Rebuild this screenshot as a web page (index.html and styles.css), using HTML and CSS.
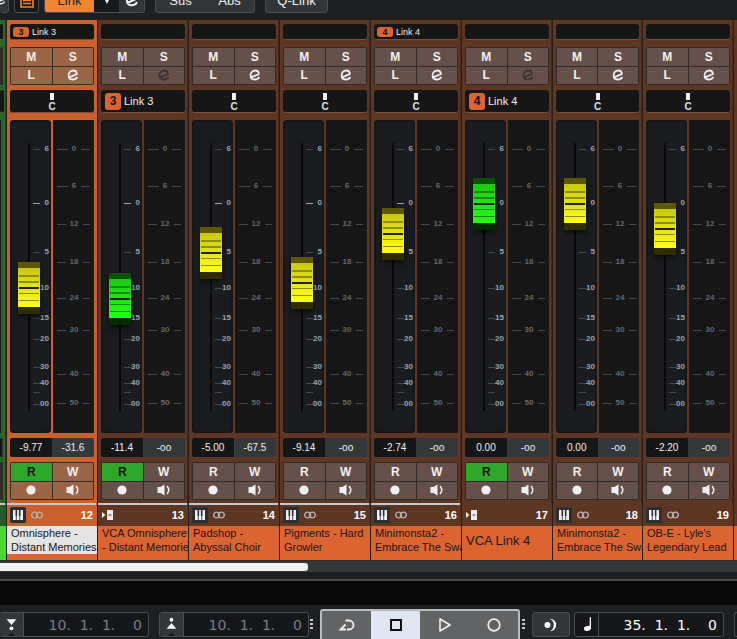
FILE: index.html
```html
<!DOCTYPE html>
<html lang="en">
<head>
<meta charset="utf-8">
<title>MixConsole</title>
<link rel="stylesheet" href="styles.css">
</head>
<body>
<svg class="defs" aria-hidden="true">
  <symbol id="edit" viewBox="0 0 12 12"><path d="M2.200 8.400 9.900 5C9.700 2.700 8.200 1.500 6.300 1.500 3.700 1.500 1.600 3.500 1.600 6.200 1.600 8.900 3.400 10.500 5.700 10.500 7.800 10.500 9.400 9.600 10.300 7.800" fill="none" stroke="currentColor" stroke-width="1.800"/></symbol>
  <symbol id="speaker" viewBox="0 0 14 12"><path d="M0.500 3h3L7.500 0.500v11L3.500 9h-3z" fill="currentColor"/><path d="M10 2q3.500 4 0 8" fill="none" stroke="currentColor" stroke-width="1.500"/></symbol>
  <symbol id="dot" viewBox="0 0 10 10"><circle cx="5" cy="5" r="4.600" fill="currentColor"/></symbol>
  <symbol id="keys" viewBox="0 0 16 16"><rect width="16" height="16" rx="2" fill="#2b2e33"/><path d="M3 3h10v10H3z" fill="#f0f0f0"/><path d="M6.300 8V13M9.700 8V13" stroke="#2b2e33" stroke-width="0.800"/><path d="M5.500 3h1.600v6h-1.600zM8.900 3h1.600v6h-1.600z" fill="#2b2e33"/></symbol>
  <symbol id="rings" viewBox="0 0 12 8"><circle cx="3.600" cy="4" r="2.900" fill="none" stroke="currentColor" stroke-width="1.400"/><circle cx="8.400" cy="4" r="2.900" fill="none" stroke="currentColor" stroke-width="1.400"/></symbol>
  <symbol id="vca" viewBox="0 0 12 10"><path d="M0 2l3.500 3L0 8zM5 0h6v10H5z" fill="#ececec"/><path d="M6.500 5h3" stroke="#5e3624"/></symbol>
</svg>

<header class="toolbar">
  <button class="tool tail" aria-label="Configure"><svg width="10" height="12"><use href="#edit"/></svg></button>
  <button class="tool list" aria-label="Racks"><svg width="14" height="16" viewBox="0 0 14 16"><path d="M1 1h12v14H1zM3 8.500h8M3 11.500h8" fill="none" stroke="currentColor" stroke-width="1.600"/></svg></button>
  <div class="group">
    <button class="link">Link</button>
    <button class="arrow" aria-label="Link options"><svg width="8" height="8" viewBox="0 0 8 8"><path d="M0 0h8L4 8z" fill="currentColor"/></svg></button>
    <button class="edit" aria-label="Edit link group"><svg width="14" height="14"><use href="#edit"/></svg></button>
  </div>
  <div class="group pair"><button>Sus</button><button>Abs</button></div>
  <button class="tool qlink">Q-Link</button>
</header>

<main class="mixer" id="mixer"></main>

<div class="scroll"><div class="thumb"></div></div>
<div class="divider"></div>
<div class="gap"></div>

<footer class="transport">
  <label class="locator left">
    <svg width="24" height="24" viewBox="0 0 24 24"><path d="M7 6h10l-5 6z" fill="#fff"/><circle cx="12" cy="15.500" r="2" fill="#fff"/><path d="M8 24l4-4 4 4z" fill="#17181a"/></svg>
    <input aria-label="Left locator" value="10.  1.  1.    0">
  </label>
  <label class="locator right">
    <svg width="24" height="24" viewBox="0 0 24 24"><path d="M7 16h10l-5-6z" fill="#fff"/><circle cx="12" cy="6.500" r="2" fill="#fff"/><path d="M8 24l4-4 4 4z" fill="#17181a"/></svg>
    <input aria-label="Right locator" value="10.  1.  1.    0">
  </label>
  <span class="grip"></span>
  <div class="buttons">
    <button aria-label="Cycle"><svg width="18" height="16" viewBox="0 0 18 16"><path d="M7.500 3.500H11a4.300 4.300 0 0 1 0 9H9M7.500 7.500 2.500 12.500H8" fill="none" stroke="currentColor" stroke-width="1.800"/></svg></button>
    <button class="on" aria-label="Stop"><svg width="12" height="12" viewBox="0 0 12 12"><path d="M1 1h10v10H1z" fill="none" stroke="currentColor" stroke-width="2"/></svg></button>
    <button aria-label="Play"><svg width="14" height="16" viewBox="0 0 14 16"><path d="M2 2l10 6-10 6z" fill="none" stroke="currentColor" stroke-width="1.600" stroke-linejoin="round"/></svg></button>
    <button aria-label="Record"><svg width="14" height="14" viewBox="0 0 14 14"><circle cx="7" cy="7" r="5.800" fill="none" stroke="currentColor" stroke-width="1.700"/></svg></button>
  </div>
  <span class="grip"></span>
  <button class="punch" aria-label="Punch"><svg width="14" height="14" viewBox="0 0 14 14"><circle cx="3.500" cy="7" r="3" fill="#fff"/><path d="M6 0.800a6.200 6.200 0 1 1 0 12.400 7 7 0 0 0 0-12.400z" fill="#fff"/></svg></button>
  <label class="locator time">
    <svg width="24" height="24" viewBox="0 0 24 24"><path d="M16 4v11.500" stroke="#fff" stroke-width="1.400"/><ellipse cx="13" cy="15.500" rx="3.700" ry="2.600" fill="#fff" transform="rotate(-15 13 15.500)"/></svg>
    <input aria-label="Primary time" value="35.  1.  1.    0">
  </label>
  <span class="next"></span>
</footer>
<script src="mixer.js"></script>
</body>
</html>
```
FILE: styles.css
```css
* { box-sizing: border-box; }
body {
  margin: 0;
  background: #1d1f21;
  color: #f0f0f0;
  font: 11px "Liberation Sans", Arial, sans-serif;
  overflow: hidden;
}
button, input { font: inherit; color: inherit; border: 0; padding: 0; margin: 0; background: none; }
button { display: flex; align-items: center; justify-content: center; }
svg { display: block; flex: none; }
.defs { position: absolute; width: 0; height: 0; }

.toolbar { height: 20px; display: flex; align-items: flex-end; padding-bottom: 7px; overflow: hidden; font-size: 13px; }
.toolbar button { height: 26px; }
.tool, .group { border: 1px solid #4a4c4f; border-radius: 3px; background: #323638; flex: none; }
.group { display: flex; height: 26px; overflow: hidden; margin-left: 5px; }
.group button { height: 24px; }
.tail { width: 9px; border-left: 0; }
.tail svg { margin-left: -6px; }
.list { width: 25px; margin-left: 5px; background: #17181a; color: #f0862e; }
.link { width: 49px; background: #f08630; color: #1c1c1c; }
.arrow { width: 25px; background: #17181a; }
.edit { width: 25px; }
.group.pair, .qlink { margin-left: 10px; }
.pair button { width: 49px; }
.qlink { width: 63px; }

.mixer { display: grid; grid-template-columns: 6px repeat(6, 91fr) 90fr 91fr 4px; }
.strip {
  --back: #5e3624;
  --cell: #65514a;
  --edge: #472719;
  min-width: 0;
  overflow: hidden;
  display: flex;
  flex-direction: column;
  border-left: 1px solid #26201c;
  background: var(--back);
}
.strip.selected { --back: #cb5f2d; --cell: #9b6548; --edge: #cb5f2d; }
.strip.before { --back: #2b662a; --cell: #46694a; --edge: #1b4a1b; border-left: 0; }
.body { flex: 1; padding: 4px 2px 3px 3px; border-right: 1px solid var(--edge); }
.before .body { padding-left: 0; }
.after .body { border-right: 0; }
.box { background: #161616; border-radius: 3px; border-bottom: 1px solid #76513f; }
.group-name { height: 16px; display: flex; align-items: center; gap: 3px; padding-left: 3px; font-size: 9px; }
.badge { background: #dc6430; color: #161616; font-weight: bold; border-radius: 3px; width: 16px; height: 10px; line-height: 10px; text-align: center; }
.pads {
  height: 38px;
  display: grid;
  grid-template: 1fr 1fr / 1fr 1fr;
  gap: 1px;
  padding: 1px;
  border-radius: 2px;
  background: #332b28;
  font-size: 12px;
  font-weight: bold;
}
.pads button { background: var(--cell); }
.pads .off { color: #3c3532; }
.pads .read { background: #2ea82a; color: #121212; }
.mute { margin-top: 7px; }
.pan { height: 23px; margin-top: 5px; padding-top: 3px; display: flex; flex-direction: column; align-items: center; font-size: 10px; line-height: 11px; font-weight: bold; color: #dbe2ec; }
.pan i { width: 4px; height: 7px; margin-bottom: 1px; background: #f0f0f0; }
.pan.vca { flex-direction: row; gap: 3px; padding: 0 0 0 4px; font-size: 11px; font-weight: normal; color: #f0f0f0; }
.pan .badge { width: 16px; height: 17px; line-height: 17px; font-weight: bold; font-size: 12px; }
.levels { height: 313px; margin-top: 7px; display: grid; grid-template-columns: 1fr 1fr; gap: 2px; }
.fader { position: relative; background: #1a1c1f; border-radius: 4px; box-shadow: inset 0 0 2px 1px #141414; overflow: hidden; }
.meter { background: #171717; }
.scale { width: 100%; height: 100%; font-size: 8px; font-weight: bold; }
.scale text { fill: #98a2ae; text-anchor: end; }
.scale line { stroke: #45484b; }
.scale .zero { stroke: #a0a4a8; }
.meter .scale text { fill: #64676a; text-anchor: middle; }
.fader input {
  --top: #5d5800; --light: #c8c811; --bright: #ffff19; --low: #302e00; --rib: #8f8d12;
  position: absolute;
  left: 8px;
  top: 3px;
  width: 22px;
  height: 307px;
  appearance: none;
  writing-mode: vertical-lr;
  direction: rtl;
}
.fader input.green { --top: #0b5200; --light: #1ec912; --bright: #24ff16; --low: #042c00; --rib: #148c0c; }
.fader input::-webkit-slider-thumb {
  appearance: none;
  width: 22px;
  height: 52px;
  box-shadow: 0 3px 5px #0008;
  background:
    linear-gradient(#222 0 0) 50% 25px / 20px 2px no-repeat,
    linear-gradient(var(--rib) 0 0) 50% 13px / 20px 2px no-repeat,
    linear-gradient(var(--rib) 0 0) 50% 19px / 20px 2px no-repeat,
    linear-gradient(var(--rib) 0 0) 50% 31px / 20px 1px no-repeat,
    linear-gradient(var(--rib) 0 0) 50% 38px / 20px 1px no-repeat,
    linear-gradient(var(--top) 0 6px, var(--light) 6px, var(--bright) 45px, var(--low) 45px);
}
.values { height: 19px; margin-top: 5px; display: grid; grid-template-columns: 1fr 1fr; border-radius: 2px; overflow: hidden; font-size: 10px; line-height: 19px; text-align: center; }
.values output { background: #151617; }
.values output + output { background: #33383a; }
.auto { margin-top: 5px; }
.line { height: 2px; margin-right: 1px; }
.line.lit { background: #c3cad6; }
.info { height: 21px; display: flex; align-items: center; gap: 5px; padding: 0 4px 1px 3px; color: #b4b0ae; }
.info b { margin-left: auto; color: #fff; }
.info .vca-icon { margin-left: 1px; }
.name { height: 34px; padding: 0 0 6px 4px; background: #dc6430; color: #1a1512; line-height: 14px; white-space: nowrap; overflow: hidden; }
.name.large { font-size: 13px; line-height: 29px; }
.selected .name { height: 34px; background: #e4e4e4; border-bottom: 6px solid #dc6430; }
.before .info { background: #245a24; }
.before .name { background: #48dc2c; }

.scroll { height: 12px; padding: 2px 0; background: #333738; border-top: 1px solid #2c2e30; }
.thumb { width: 41.8%; height: 8px; border-radius: 0 3px 3px 0; background: #f0f0f0; }
.divider { height: 9px; border-bottom: 2px solid #4a4b4f; }
.gap { height: 24px; background: #090909; }

.transport { height: 34px; display: flex; align-items: flex-start; padding-top: 7px; overflow: hidden; }
.locator { width: 150px; height: 25px; display: flex; flex: none; border: 1px solid #4a4c4f; border-radius: 3px; background: #16171a; font: 14px "DejaVu Sans", sans-serif; color: #7c7e80; overflow: hidden; }
.locator svg { background: #323638; border-right: 1px solid #4a4c4f; }
.locator input { flex: 1; min-width: 0; text-align: right; padding-right: 6px; }
.left { margin-left: -1px; }
.right { margin-left: 10px; }
.grip { width: 3px; height: 11px; margin: 7px 3px 0 1px; flex: none; background: repeating-linear-gradient(#c9cbcd 0 2px, transparent 2px 4px); }
.buttons { display: flex; flex: 1; min-width: 200px; height: 34px; margin: -3px 1px 0 4px; border: 2px solid #b9babc; border-radius: 3px; background: #626365; }
.buttons button { flex: 1; height: 28px; }
.buttons .on { background: #dfe6f2; color: #111; }
.punch { width: 38px; height: 25px; flex: none; margin-left: 4px; border: 1px solid #4a4c4f; border-radius: 3px; background: #323638; }
.time { margin-left: 4px; color: #fff; }
.time svg { background: none; }
.next { width: 4px; height: 25px; flex: none; margin-left: 10px; border: 1px solid #4a4c4f; border-right: 0; border-radius: 3px 0 0 3px; background: #16171a; }
```
FILE: mixer.js
```js
// pos is the fader height above the bottom of its travel (0 to 255)
const channels = [
  { n: 12, name: "Omnisphere -<br>Distant Memories", group: 3, pos: 116, level: "-9.77", peak: "-31.6", read: true, selected: true, line: true },
  { n: 13, name: "VCA Omnisphere<br>- Distant Memories", vca: 3, pos: 105, level: "-11.4", peak: "-oo", read: true, line: true },
  { n: 14, name: "Padshop -<br>Abyssal Choir", pos: 151, level: "-5.00", peak: "-67.5", line: true },
  { n: 15, name: "Pigments - Hard<br>Growler", pos: 121, level: "-9.14", peak: "-oo", line: true },
  { n: 16, name: "Minimonsta2 -<br>Embrace The Swa", group: 4, pos: 170, level: "-2.74", peak: "-oo", line: true },
  { n: 17, name: "VCA Link 4", large: true, vca: 4, pos: 200, level: "0.00", peak: "-oo", read: true },
  { n: 18, name: "Minimonsta2 -<br>Embrace The Swa", pos: 200, level: "0.00", peak: "-oo" },
  { n: 19, name: "OB-E - Lyle's<br>Legendary Lead", pos: 175, level: "-2.20", peak: "-oo" }
];

const faderMarks = [[29, "6"], [83, "0"], [132, "5"], [168, "10"], [198, "15"], [219, "20"], [247, "30"], [263, "40"], [272, ""], [284, "00"]];
const meterMarks = [[29, "0"], [66, "6"], [104, "12"], [142, "18"], [178, "24"], [210, "30"], [254, "40"], [283, "50"]];

const icon = (id, w, h, cls = "") => `<svg class="${cls}" width="${w}" height="${h}"><use href="#${id}"/></svg>`;

const faderScale = `<svg class="scale"><path d="M19 23V291" stroke="#0a0a0b" stroke-width="2"/>` +
  faderMarks.map(([y, t]) => `<line class="${t === "0" ? "zero" : ""}" x1="23" x2="30" y1="${y + 0.5}" y2="${y + 0.5}"/><text x="39" y="${y + 2}">${t}</text>`).join("") + `</svg>`;

const meterScale = `<svg class="scale">` +
  meterMarks.map(([y, t]) => {
    const wide = t.length > 1;
    return `<line x1="4" x2="${wide ? 13 : 15}" y1="${y + 0.5}" y2="${y + 0.5}"/><line x1="${wide ? 30 : 28}" x2="37" y1="${y + 0.5}" y2="${y + 0.5}"/><text x="21" y="${y + 2}">${t}</text>`;
  }).join("") + `</svg>`;

const strip = c => `
<section class="strip ${c.selected ? "selected" : ""}" aria-label="Channel ${c.n}">
  <div class="body">
    <div class="box group-name">${c.group ? `<span class="badge">${c.group}</span><span>Link ${c.group}</span>` : ""}</div>
    <div class="pads mute"><button>M</button><button>S</button><button>L</button><button class="${c.vca ? "off" : ""}" aria-label="Edit">${icon("edit", 12, 12)}</button></div>
    ${c.vca ? `<div class="box pan vca"><span class="badge">${c.vca}</span><span>Link ${c.vca}</span></div>` : `<div class="box pan"><i></i>C</div>`}
    <div class="levels">
      <div class="fader">${faderScale}<input type="range" aria-label="Volume" class="${c.vca ? "green" : ""}" min="0" max="255" value="${c.pos}"></div>
      <div class="meter">${meterScale}</div>
    </div>
    <div class="values"><output>${c.level}</output><output>${c.peak}</output></div>
    <div class="pads auto"><button class="${c.read ? "read" : ""}">R</button><button>W</button><button aria-label="Record enable">${icon("dot", 10, 10)}</button><button aria-label="Monitor">${icon("speaker", 14, 12)}</button></div>
  </div>
  <div class="line ${c.line ? "lit" : ""}"></div>
  <div class="info">${c.vca ? icon("vca", 12, 10, "vca-icon") : icon("keys", 16, 16) + icon("rings", 12, 8)}<b>${c.n}</b></div>
  <div class="name ${c.large ? "large" : ""}">${c.name}</div>
</section>`;

// The neighbouring channels, of which only the rim is in view
const rim = `<div class="box group-name"></div><div class="pads mute"></div><div class="box pan vca"></div><div class="levels"><div class="meter"></div></div><div class="values"><output></output><output></output></div><div class="pads auto"></div>`;
const edge = (cls, lit, inner) => `
<section class="strip ${cls}" aria-hidden="true">
  <div class="body">${inner}</div><div class="line ${lit}"></div><div class="info"></div><div class="name"></div>
</section>`;

document.getElementById("mixer").innerHTML = edge("before", "lit", rim) + channels.map(strip).join("") + edge("after", "", "");
```
